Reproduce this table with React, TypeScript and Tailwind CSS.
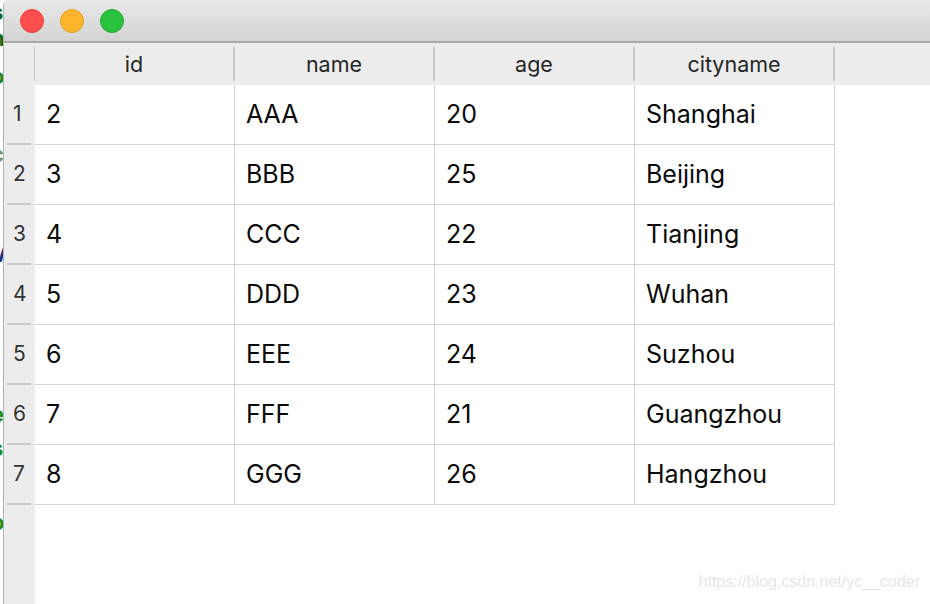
import React from 'react';

const COLUMNS = ['id', 'name', 'age', 'cityname'];

const ROWS = [
  ['2', 'AAA', '20', 'Shanghai'],
  ['3', 'BBB', '25', 'Beijing'],
  ['4', 'CCC', '22', 'Tianjing'],
  ['5', 'DDD', '23', 'Wuhan'],
  ['6', 'EEE', '24', 'Suzhou'],
  ['7', 'FFF', '21', 'Guangzhou'],
  ['8', 'GGG', '26', 'Hangzhou'],
];

// bits of the editor window peeking out behind the app window
const BEHIND = [
  { h: 'h-[26px]', ch: 's', c: 'text-[#0a6b0a]' },
  { h: 'h-[38px]', ch: 'n', c: 'text-[#0a6b0a]' },
  { h: 'h-[78px]', ch: 'o', c: 'text-[#178a17]' },
  { h: 'h-[60px]', ch: 'c', c: 'text-[#6a9a6a]' },
  { h: 'h-[40px]', ch: 'l', c: 'text-[#12a012]' },
  { h: 'h-[160px]', ch: 'V', c: 'text-[#1a2f8a]' },
  { h: 'h-[34px]', ch: 'e', c: 'text-[#179017]' },
  { h: 'h-[74px]', ch: 's', c: 'text-[#179017]' },
  { h: 'h-[36px]', ch: 'o', c: 'text-[#179017]' },
  { h: 'h-[30px]', ch: 'I', c: 'text-[#7a147a]' },
];

const TrafficLights = () => (
  <div className="flex items-center gap-4 pl-[16px]">
    <span className="w-6 h-6 rounded-full bg-[#fd4d4c] border border-[#e2403c]" />
    <span className="w-6 h-6 rounded-full bg-[#feb52b] border border-[#e09f22]" />
    <span className="w-6 h-6 rounded-full bg-[#2ac33f] border border-[#1fa530]" />
  </div>
);

export default function App() {
  return (
    <div
      className="relative w-[930px] h-[604px] flex overflow-hidden bg-white"
      style={{ fontFamily: 'Inter, "Liberation Sans", sans-serif' }}
    >
      {/* background editor strip */}
      <div className="w-[3px] shrink-0 flex flex-col overflow-hidden bg-white">
        {BEHIND.map((b, i) => (
          <div key={i} className={`${b.h} flex items-start`}>
            <span className={`-ml-[9px] text-[22px] leading-[24px] font-bold ${b.c}`}>{b.ch}</span>
          </div>
        ))}
      </div>

      {/* app window */}
      <div className="flex-1 flex flex-col border-l border-[#b3b3b3] rounded-tl-[6px] overflow-hidden">
        <div className="h-[43px] shrink-0 flex items-center bg-gradient-to-b from-[#e9e9e9] to-[#d3d3d3] border-b-2 border-[#a9a9a9]">
          <TrafficLights />
        </div>

        <div className="flex-1 flex">
          {/* row header column */}
          <div className="w-[31px] shrink-0 flex flex-col bg-[#ececec]">
            <div className="h-[42px] flex items-center justify-end">
              <span className="w-[2px] h-[34px] bg-[#c6c6c6] -mr-[1px]" />
            </div>
            {ROWS.map((_, i) => (
              <div key={i} className="h-[60px] flex flex-col">
                <div className="flex-1 flex items-center pl-[9px] text-[21px] text-[#333]">{i + 1}</div>
                <span className="h-[2px] ml-[3px] w-[24px] bg-[#c8c8c8]" />
              </div>
            ))}
          </div>

          {/* table */}
          <div className="flex-1 flex flex-col">
            <div className="h-[42px] flex items-center bg-[#ececec]">
              {COLUMNS.map((c) => (
                <div key={c} className="w-[200px] flex items-center">
                  <div className="flex-1 text-center text-[21.5px] text-[#262626]">{c}</div>
                  <span className="w-[2px] h-[34px] bg-[#c6c6c6]" />
                </div>
              ))}
            </div>
            {ROWS.map((r, i) => (
              <div key={i} className="h-[60px] flex">
                {r.map((v, j) => (
                  <div
                    key={j}
                    className="w-[200px] flex items-center pl-[11px] border-r border-b border-[#d2d2d2] text-[25px] text-[#0a0a0a]"
                  >
                    {v}
                  </div>
                ))}
              </div>
            ))}
          </div>
        </div>
      </div>

      <div className="absolute right-[10px] bottom-[10px] text-[16px] text-[#e6e6e6]" style={{ fontFamily: '"Liberation Sans", sans-serif' }}>
        https://blog.csdn.net/yc__coder
      </div>
    </div>
  );
}
